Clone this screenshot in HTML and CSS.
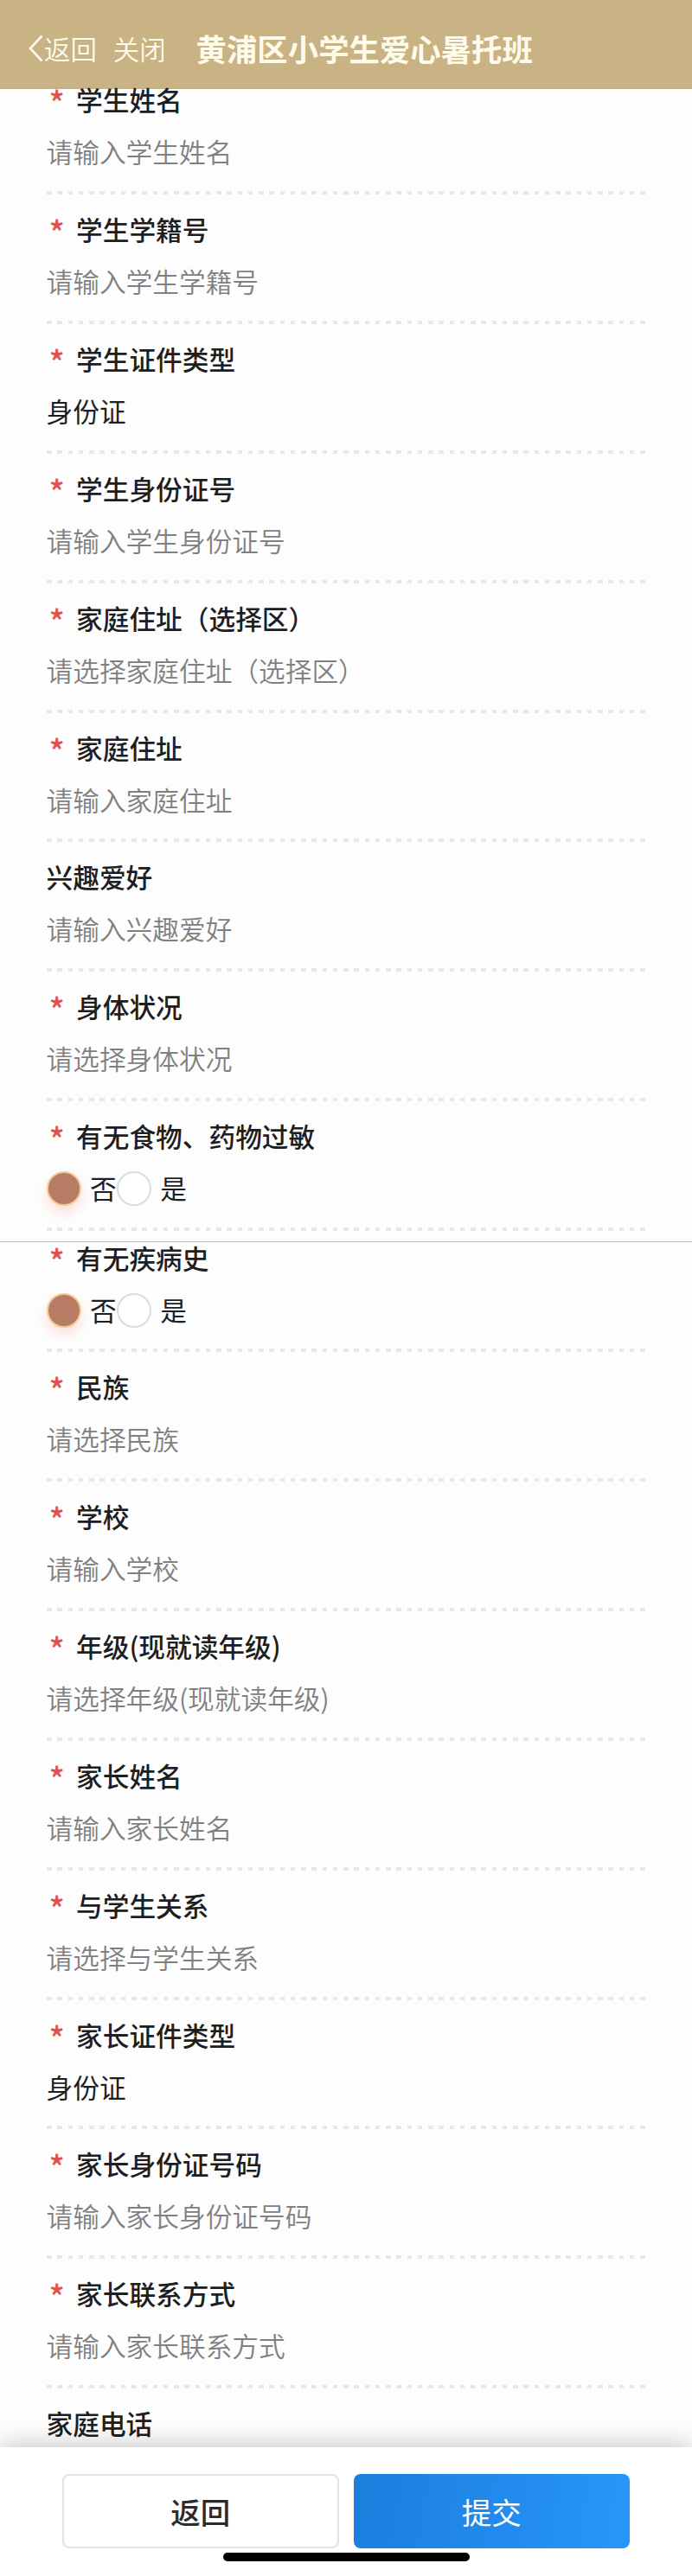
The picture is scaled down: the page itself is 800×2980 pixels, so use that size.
FILE: index.html
```html
<!DOCTYPE html>
<html lang="zh-CN">
<head>
  <meta charset="UTF-8">
  <meta name="viewport" content="width=device-width, initial-scale=1.0">
  <title>黄浦区小学生爱心暑托班</title>
  <link rel="stylesheet" href="styles.css">
</head>
<body>
  <div class="page">
    <header class="nav">
      <svg class="nav-arrow" width="17" height="32" viewBox="0 0 17 32">
        <path d="M15.5 1.5 L2 16 L15.5 30.5" fill="none" stroke="#fffbea" stroke-width="2.6" />
      </svg>
      <span class="nav-back">返回</span>
      <span class="nav-close">关闭</span>
      <h1 class="nav-title">黄浦区小学生爱心暑托班</h1>
    </header>

    <section class="form-section">
      <div class="field">
        <div class="label"><span class="star">*</span>学生姓名</div>
        <div class="placeholder">请输入学生姓名</div>
      </div>
      <div class="field">
        <div class="label"><span class="star">*</span>学生学籍号</div>
        <div class="placeholder">请输入学生学籍号</div>
      </div>
      <div class="field">
        <div class="label"><span class="star">*</span>学生证件类型</div>
        <div class="value">身份证</div>
      </div>
      <div class="field">
        <div class="label"><span class="star">*</span>学生身份证号</div>
        <div class="placeholder">请输入学生身份证号</div>
      </div>
      <div class="field">
        <div class="label"><span class="star">*</span>家庭住址（选择区）</div>
        <div class="placeholder">请选择家庭住址（选择区）</div>
      </div>
      <div class="field">
        <div class="label"><span class="star">*</span>家庭住址</div>
        <div class="placeholder">请输入家庭住址</div>
      </div>
      <div class="field">
        <div class="label">兴趣爱好</div>
        <div class="placeholder">请输入兴趣爱好</div>
      </div>
      <div class="field">
        <div class="label"><span class="star">*</span>身体状况</div>
        <div class="placeholder">请选择身体状况</div>
      </div>
      <div class="field">
        <div class="label"><span class="star">*</span>有无食物、药物过敏</div>
        <div class="value radio-group">
          <span class="radio checked"></span><span class="radio-text">否</span>
          <span class="radio"></span><span class="radio-text">是</span>
        </div>
      </div>
    </section>

    <section class="form-section form-section-more">
      <div class="field">
        <div class="label"><span class="star">*</span>有无疾病史</div>
        <div class="value radio-group">
          <span class="radio checked"></span><span class="radio-text">否</span>
          <span class="radio"></span><span class="radio-text">是</span>
        </div>
      </div>
      <div class="field">
        <div class="label"><span class="star">*</span>民族</div>
        <div class="placeholder">请选择民族</div>
      </div>
      <div class="field">
        <div class="label"><span class="star">*</span>学校</div>
        <div class="placeholder">请输入学校</div>
      </div>
      <div class="field">
        <div class="label"><span class="star">*</span>年级(现就读年级)</div>
        <div class="placeholder">请选择年级(现就读年级)</div>
      </div>
      <div class="field">
        <div class="label"><span class="star">*</span>家长姓名</div>
        <div class="placeholder">请输入家长姓名</div>
      </div>
      <div class="field">
        <div class="label"><span class="star">*</span>与学生关系</div>
        <div class="placeholder">请选择与学生关系</div>
      </div>
      <div class="field">
        <div class="label"><span class="star">*</span>家长证件类型</div>
        <div class="value">身份证</div>
      </div>
      <div class="field">
        <div class="label"><span class="star">*</span>家长身份证号码</div>
        <div class="placeholder">请输入家长身份证号码</div>
      </div>
      <div class="field">
        <div class="label"><span class="star">*</span>家长联系方式</div>
        <div class="placeholder">请输入家长联系方式</div>
      </div>
      <div class="field field-last">
        <div class="label">家庭电话</div>
      </div>
    </section>

    <footer class="footer">
      <div class="footer-buttons">
        <button type="button" class="btn">返回</button>
        <button type="button" class="btn btn-submit">提交</button>
      </div>
      <div class="home-bar"></div>
    </footer>
  </div>
</body>
</html>
```

FILE: styles.css
```css
* {
  box-sizing: border-box;
}

body {
  margin: 0;
  font-family: "Noto Sans CJK SC", sans-serif;
  background-color: #fdfdfd;
  color: #1c1e22;
}

.page {
  width: 800px;
  height: 2980px;
  display: flex;
  flex-direction: column;
  overflow: hidden;
}

/* Top bar */
.nav {
  flex: none;
  height: 102.7px;
  padding: 11px 0 0 33px;
  display: flex;
  align-items: center;
  background-color: #c9b283;
  border-bottom: 2px solid #bdb394;
  color: #fffbea;
  white-space: nowrap;
}

.nav-arrow {
  flex: none;
  margin-right: 1px;
}

.nav-back,
.nav-close {
  font-size: 30.4px;
  font-weight: 350;
  line-height: 44px;
}

.nav-close {
  margin-left: 19px;
}

.nav-title {
  margin: 0 0 0 35px;
  font-size: 35.4px;
  font-weight: 700;
  line-height: 50px;
}

/* Form */
.form-section {
  flex: none;
  height: 1333.3px;
  padding: 0 51.5px 12px 53.5px;
  display: flex;
  flex-direction: column;
  justify-content: flex-end;
  font-size: 30.7px;
}

.form-section-more {
  height: 1394.7px;
  padding-bottom: 0;
  border-top: 1px solid #bababa;
}

.field {
  flex: none;
  height: 149.85px;
  padding-top: 20px;
  background: repeating-linear-gradient(90deg, #e8e8e8 0 5.5px, transparent 5.5px 12.25px) left bottom / 100% 4px no-repeat;
}

.field-last {
  height: 67.5px;
  background: none;
}

.label,
.placeholder,
.value {
  height: 40px;
  line-height: 40px;
  white-space: nowrap;
}

.label {
  font-weight: 500;
}

.placeholder,
.value {
  margin-top: 20px;
}

.placeholder {
  color: #808080;
  font-weight: 350;
}

.star {
  display: inline-block;
  width: 34.5px;
  height: 40px;
  padding-left: 3px;
  color: #e0524f;
  font-size: 38px;
  line-height: 46px;
  vertical-align: top;
}

.radio-group {
  display: flex;
  align-items: center;
}

.radio {
  position: relative;
  top: 1px;
  width: 40px;
  height: 40px;
  border: 2px solid #dcdcdc;
  border-radius: 50%;
  background-color: #fff;
}

.radio.checked {
  border-color: #f3cb98;
  background-color: #b77c64;
  box-shadow: 0 8px 14px rgba(255, 110, 90, 0.2);
}

.radio-text {
  margin-left: 10.5px;
}

/* Bottom buttons */
.footer {
  position: relative;
  flex: none;
  height: 149.3px;
  padding: 31.5px 72px 0;
  background-color: #fff;
  box-shadow: 0 -4px 26px rgba(0, 0, 0, 0.2);
}

.footer-buttons {
  display: flex;
  justify-content: space-between;
}

.btn {
  width: 319.5px;
  height: 85.5px;
  padding: 0;
  border: 2px solid #e2e2e2;
  border-radius: 8px;
  background-color: #fff;
  color: #2b2b2b;
  font-family: inherit;
  font-size: 34.5px;
  font-weight: 500;
}

.btn-submit {
  border: none;
  background: linear-gradient(100deg, #1c7ddc, #2796fb);
  color: #fff;
  font-weight: 400;
}

.home-bar {
  width: 285px;
  height: 10.5px;
  margin: 5.3px auto 0;
  border-radius: 6px;
  background-color: #000;
}
```
